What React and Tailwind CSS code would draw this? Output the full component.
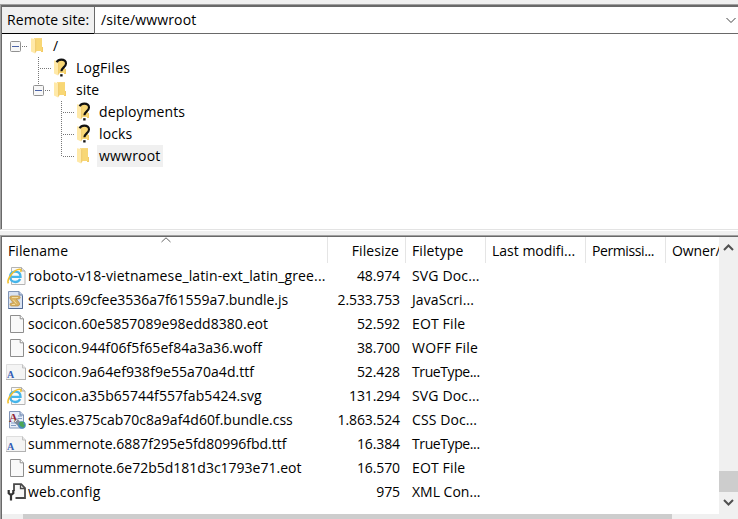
import React from "react";

function Folder({ unknown = false }) {
  return (
    <svg width="16" height="20" viewBox="0 0 16 20" className="shrink-0">
      <path d="M4 2h8v12H4z" fill="#fbdc8a" />
      <path d="M11 11h2v5h-2z" fill="#f3cb68" />
      <path d="M6 2.5h6V15H6z" fill="#f8d775" />
      <path d="M1 2.2L5 3v14.5L1 15.6z" fill="#ffe9a8" />
      <path d="M5 3v14.5l1.3-2.3V3.6z" fill="#f1cd72" />
      {unknown && (
        <g>
          <path d="M3.6 4.2C4.5 2.6 6 1.6 8.3 1.6c2.9 0 4.7 1.4 4.7 3.8 0 3.7-4.6 4.2-4.6 7.8" fill="none" stroke="#111" strokeWidth="2.1" />
          <path d="M7.2 16.2h2.4v2.3H7.2z" fill="#111" />
        </g>
      )}
    </svg>
  );
}

function Toggle() {
  return (
    <svg width="11" height="11" viewBox="0 0 11 11" className="shrink-0">
      <rect x=".5" y=".5" width="10" height="10" rx="1" fill="#f7f7f7" stroke="#919191" />
      <path d="M2 5.5h7" stroke="#4b63a7" />
    </svg>
  );
}

function Branch({ kind }) {
  const paths = {
    root: "M13 11.5H18",
    mid: "M6.5 0V22M8 11.5H19",
    open: "M6.5 0V6M13 11.5H18",
    end: "M6.5 0V12M8 11.5H19",
  };
  return (
    <span className="relative flex h-[22px] w-[19px] shrink-0 items-center">
      <svg width="19" height="22" className="shrink-0">
        <path d={paths[kind]} fill="none" stroke="#777" strokeDasharray="1 1" />
      </svg>
      {(kind === "root" || kind === "open") && (
        <span className="absolute top-[6px] left-[1px]"><Toggle /></span>
      )}
    </span>
  );
}

const tree = [
  { name: "/", pad: "pl-[7px]", kind: "root" },
  { name: "LogFiles", pad: "pl-[30px]", kind: "mid", unknown: true, spacing: "tracking-[0.25px]" },
  { name: "site", pad: "pl-[30px]", kind: "open" },
  { name: "deployments", pad: "pl-[53px]", kind: "mid", unknown: true, spacing: "tracking-[0.1px]" },
  { name: "locks", pad: "pl-[53px]", kind: "mid", unknown: true, spacing: "tracking-[0.15px]" },
  { name: "wwwroot", pad: "pl-[53px]", kind: "end", selected: true, spacing: "tracking-[0.2px]" },
];

function FileIcon({ kind }) {
  if (kind === "web")
    return (
      <svg width="19" height="20" viewBox="0 0 19 20">
        <path d="M4.5 1.5h10l3.5 3.5v13.5H4.5z" fill="#fafafa" stroke="#b4b4b4" />
        <path d="M14.5 1.5V5H18" fill="#e4e4e4" stroke="#aaa" />
        <path d="M13.2 13c-1 2-2.7 3-4.9 3-3.3 0-5.3-2.2-5.3-5.2s2-5.2 5.3-5.2 5.2 2.1 5.2 5.2H4.5" fill="none" stroke="#45b5ea" strokeWidth="2.3" />
        <path d="M1.4 17.4C-.8 13 7 3.3 12.6 3.2c1.5 0 1.7 1.2 1 2.7" fill="none" stroke="#f2c12f" strokeWidth="1.6" />
      </svg>
    );
  if (kind === "script")
    return (
      <svg width="19" height="20" viewBox="0 0 19 20">
        <path d="M3.5 1.5H14L17.5 5v13.5h-14z" fill="#d9e3f3" stroke="#8195b6" />
        <path d="M14 1.5V5h3.5" fill="#bdcce4" stroke="#6e83a7" />
        <path d="M3.5 18.5h14V6" fill="none" stroke="#536b95" />
        <path d="M6.5 6h7.2c2 0 2 3 0 3h-2.2l2.6 3.5c1.2 1.8.2 3.5-1.6 3.5h-6c-2 0-2-3 0-3h1.8L5.6 9.5C4.2 7.8 4.8 6 6.5 6z" fill="#d9b263" stroke="#b78d42" strokeWidth=".7" />
        <path d="M7 7.5h6M8.2 9.7l3.2 4M7 14.5h3" stroke="#f4dea0" />
      </svg>
    );
  if (kind === "font")
    return (
      <svg width="21" height="20" viewBox="0 0 21 20">
        <path d="M.5 2.5h16l3 3.5v11.5H.5z" fill="#f4f4f4" stroke="#dedede" />
        <path d="M16.5 2.5V6h3" fill="#e4e4e4" stroke="#c2c2c2" />
        <path d="M0 17.5h20M19.5 6v12" stroke="#b2b2b2" />
        <text x="1" y="16" fill="#335db5" fontFamily="Liberation Serif, serif" fontWeight="bold" fontSize="10">A</text>
      </svg>
    );
  if (kind === "css")
    return (
      <svg width="21" height="20" viewBox="0 0 21 20">
        <path d="M3.5 1.5H14L17.5 5v13h-14z" fill="#e7edf8" stroke="#8295b7" />
        <path d="M14 1.5V5h3.5" fill="#c7d4ec" stroke="#6f86ac" />
        <path d="M12 6h4M12 8.5h4M5 13h6M5 15.5h5" stroke="#7f9bc4" />
        <text x="3" y="12" fill="#922331" fontFamily="Liberation Serif, serif" fontWeight="bold" fontSize="12">A</text>
        <path d="M8 12l3-4 5 6-3 3z" fill="#7f8999" />
        <path d="M9 12l2.2-2.5" stroke="#eee" />
        <circle cx="16" cy="15" r="3.8" fill="#4c8bc1" />
        <path d="M14.4 11.5l3.8.6-1.2 1.9 2.1 1-1.9 2.8-2.8-1.9-1.4-2z" fill="#4ca654" />
      </svg>
    );
  if (kind === "config")
    return (
      <svg width="20" height="20" viewBox="0 0 20 20">
        <path d="M7 9V2.2h7.2l3.8 3.8V16H8.5" fill="#f6f6f6" stroke="#484848" strokeWidth="1.8" />
        <path d="M13.5 2v4.5H18" fill="none" stroke="#484848" strokeWidth="1.3" />
        <path d="M1.7 8v3.2L4 13l2.3-1.8V8M4 12v6.5" fill="none" stroke="#333" strokeWidth="2.2" />
      </svg>
    );
  return (
    <svg width="19" height="20" viewBox="0 0 19 20">
      <path d="M4.5 1.5h9.7l3.3 3.3v13.7h-13z" fill="#f9f9f9" stroke="#8e8e8e" />
      <path d="M14.2 1.5v3.3h3.3" fill="#fff" stroke="#8e8e8e" />
    </svg>
  );
}

const iconPad = {
  web: "pl-[5px]",
  script: "pl-[3px]",
  font: "pl-[4px]",
  css: "pl-[4px]",
  config: "pl-[5px]",
  blank: "pl-[4px]",
};

const files = [
  ["web", "roboto-v18-vietnamese_latin-ext_latin_gree...", "48.974", "SVG Doc...", "tracking-[0.13px]", "tracking-[0.15px]"],
  ["script", "scripts.69cfee3536a7f61559a7.bundle.js", "2.533.753", "JavaScri...", "tracking-[-0.03px]", "tracking-[0.1px]"],
  ["blank", "socicon.60e5857089e98edd8380.eot", "52.592", "EOT File", "tracking-[0.05px]", "tracking-[0.15px]"],
  ["blank", "socicon.944f06f5f65ef84a3a36.woff", "38.700", "WOFF File", "tracking-[0.08px]", "tracking-[0.22px]"],
  ["font", "socicon.9a64ef938f9e55a70a4d.ttf", "52.428", "TrueType...", "tracking-[0.06px]", "tracking-[-0.4px]"],
  ["web", "socicon.a35b65744f557fab5424.svg", "131.294", "SVG Doc...", "tracking-[0.06px]", "tracking-[0.15px]"],
  ["css", "styles.e375cab70c8a9af4d60f.bundle.css", "1.863.524", "CSS Doc...", "tracking-[0px]", "tracking-[0.1px]"],
  ["font", "summernote.6887f295e5fd80996fbd.ttf", "16.384", "TrueType...", "tracking-[0px]", "tracking-[-0.4px]"],
  ["blank", "summernote.6e72b5d181d3c1793e71.eot", "16.570", "EOT File", "tracking-[0px]", "tracking-[0.15px]"],
  ["config", "web.config", "975", "XML Con...", "tracking-[0.2px]", "tracking-[0px]"],
];

export default function App() {
  return (
    <div className="flex h-[519px] w-[738px] flex-col overflow-hidden bg-[#f0f0f0] pt-1 font-['Open_Sans',sans-serif] text-[14px] leading-[22px] whitespace-nowrap text-black">
      <section className="flex h-[226px] shrink-0 flex-col border-t border-b border-l border-t-[#a0a0a0] border-b-[#e3e3e3] border-l-[#a0a0a0] bg-white">
        <div className="flex flex-1 flex-col border-t-2 border-l border-[#696969]">
          <div className="flex h-[27px]">
            <div className="w-[92px] border-b border-black bg-[#f0f0f0] pt-[2px] pl-[5px] tracking-[0.1px]">Remote site:</div>
            <div className="flex flex-1 items-start justify-between border-b border-l border-[#696969] pt-[2px] pl-[6px]">
              <span className="tracking-[0.15px]">/site/wwwroot</span>
              <svg width="12" height="22" className="mr-[1px]"><path d="M1.5 9l4.5 4.5L10.5 9" fill="none" stroke="#444" /></svg>
            </div>
          </div>
          <div className="pt-[1px]">
            {tree.map((node) => (
              <div key={node.name} className={`flex h-[22px] items-center ${node.pad}`}>
                <Branch kind={node.kind} />
                <span className="ml-[2px] flex"><Folder unknown={node.unknown} /></span>
                <span className={`ml-[5px] px-[2px] ${node.spacing ?? ""} ${node.selected ? "bg-[#f0f0f0]" : ""}`}>{node.name}</span>
              </div>
            ))}
          </div>
        </div>
      </section>
      <div className="h-[5px] shrink-0 border-t border-white" />
      <section className="flex min-h-0 flex-1 border-t border-l border-[#a0a0a0]">
        <div className="flex min-w-0 flex-1 border-t border-l border-[#696969] bg-white">
          <div className="flex w-[717px] shrink-0 flex-col overflow-hidden">
            <div className="relative flex h-[26px] shrink-0 overflow-hidden pt-[3px]">
              <span className="w-[325px] pl-[6px] tracking-[0.1px]">Filename</span>
              <span className="w-[78px] pr-[6px] text-right tracking-[0.05px]">Filesize</span>
              <span className="w-[80px] pl-[7px] tracking-[0.1px]">Filetype</span>
              <span className="w-[100px] pl-[7px]">Last modifi...</span>
              <span className="w-[80px] pl-[7px] tracking-[-0.4px]">Permissi...</span>
              <span className="w-[54px] overflow-hidden pl-[7px] tracking-[-0.1px]">Owner/</span>
              <svg className="absolute top-0 left-[159px]" width="10" height="6"><path d="M.5 5L5 .8 9.5 5" fill="none" stroke="#666" /></svg>
              <span className="absolute top-0 left-[325px] h-full w-px bg-[#e5e5e5]" />
              <span className="absolute top-0 left-[403px] h-full w-px bg-[#e5e5e5]" />
              <span className="absolute top-0 left-[483px] h-full w-px bg-[#e5e5e5]" />
              <span className="absolute top-0 left-[583px] h-full w-px bg-[#e5e5e5]" />
              <span className="absolute top-0 left-[663px] h-full w-px bg-[#e5e5e5]" />
            </div>
            <div className="h-[251px] shrink-0 pt-[1px]">
              {files.map(([kind, name, size, type, spacing, typeSpacing]) => (
                <div key={name} className="flex h-6 items-center">
                  <span className={`flex w-[26px] shrink-0 pb-px ${iconPad[kind]}`}><FileIcon kind={kind} /></span>
                  <span className={`w-[299px] shrink-0 ${spacing}`}>{name}</span>
                  <span className="w-[78px] shrink-0 pr-[5px] text-right tracking-[-0.1px]">{size}</span>
                  <span className={`w-[80px] shrink-0 pl-[7px] ${typeSpacing}`}>{type}</span>
                </div>
              ))}
            </div>
            <div className="h-[5px] shrink-0 bg-[#f0f0f0] pl-[21px]"><div className="h-full w-[649px] bg-[#cdcdcd]" /></div>
          </div>
          <div className="flex w-[19px] shrink-0 flex-col items-center bg-[#f0f0f0]">
            <svg width="19" height="22"><path d="M5 13l4.5-4.5L14 13" fill="none" stroke="#505050" strokeWidth="2" /></svg>
            <div className="mt-[212px] h-[21px] w-full bg-[#cdcdcd]" />
            <svg width="19" height="22"><path d="M5 8l4.5 4.5L14 8" fill="none" stroke="#505050" strokeWidth="2" /></svg>
          </div>
        </div>
      </section>
    </div>
  );
}
